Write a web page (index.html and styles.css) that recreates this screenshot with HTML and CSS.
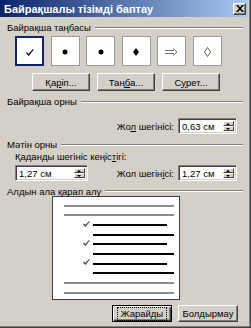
FILE: index.html
```html
<!DOCTYPE html>
<html lang="kk">
<head>
    <meta charset="UTF-8">
    <title>Байрақшалы тізімді баптау</title>

    <link rel="stylesheet" href="styles.css">
</head>
<body>

<div class="window">

    <div class="titlebar">
        <span class="title">Байрақшалы тізімді баптау</span>
        <span class="close">
            <svg width="8" height="7" viewBox="0 0 8 7"><path d="M0 0h2l2 2.2L6 0h2L5 3.5 8 7H6L4 4.8 2 7H0l3-3.5z" fill="#000"/></svg>
        </span>
    </div>

    <div class="body">

        <div class="legend"><span>Байрақша таңбасы</span></div>

        <div class="bullets">
            <div class="bullet selected">
                <svg width="8" height="7" viewBox="0 0 8 7"><path d="M0 4 1.1 3.2 2.6 4.9 6.9 0 7.7 .7 2.7 7z" fill="#000"/></svg>
            </div>
            <div class="bullet">
                <svg width="6" height="6" viewBox="0 0 6 6"><circle cx="3" cy="3" r="2.5" fill="#000"/></svg>
            </div>
            <div class="bullet">
                <svg width="6" height="6" viewBox="0 0 6 6"><circle cx="3" cy="3" r="2.5" fill="#000"/></svg>
            </div>
            <div class="bullet">
                <svg width="6" height="8" viewBox="0 0 6 8"><path d="M3 0 6 4 3 8 0 4z" fill="#000"/></svg>
            </div>
            <div class="bullet">
                <svg width="13" height="8" viewBox="0 0 13 8"><path d="M0 2.5h9M0 5.5h9M8 .5 12 4 8 7.5" fill="none" stroke="#707070" stroke-width="1"/></svg>
            </div>
            <div class="bullet">
                <svg width="7" height="10" viewBox="0 0 7 10"><path d="M3.5 .5 6.5 5 3.5 9.5 .5 5z" fill="none" stroke="#606060" stroke-width="1"/></svg>
            </div>
        </div>

        <div class="btnrow">
            <a class="btn" href="javascript:void(0)">Қа<u>р</u>іп...</a>
            <a class="btn" href="javascript:void(0)">Таң<u>б</u>а...</a>
            <a class="btn" href="javascript:void(0)">С<u>у</u>рет...</a>
        </div>

        <div class="legend"><span>Байрақша орны</span></div>

        <div class="row right">
            <span class="lbl">Жо<u>л</u> шегінісі:</span>
            <div class="spin">
                <span class="val">0,63 см</span>
                <span class="arrows"><span class="up"></span><span class="down"></span></span>
            </div>
        </div>

        <div class="legend"><span>Мәтін орны</span></div>

        <div class="caption">Қаданды шегініс кеңіс<u>т</u>ігі:</div>

        <div class="row split">
            <div class="spin wide">
                <span class="val">1,27 см</span>
                <span class="arrows"><span class="up"></span><span class="down"></span></span>
            </div>
            <div class="pair">
                <span class="lbl">Жол шегін<u>і</u>сі:</span>
                <div class="spin">
                    <span class="val">1,27 см</span>
                    <span class="arrows"><span class="up"></span><span class="down"></span></span>
                </div>
            </div>
        </div>

        <div class="legend short"><span>Алдын ала қарап алу</span></div>

        <div class="preview">
            <div class="line gray"></div>
            <div class="line gray"></div>
            <div class="line black short"><svg class="tick" width="7" height="6" viewBox="0 0 7 6"><path d="M0 3.3 1 2.6 2.3 4 6.2 0 6.9 .6 2.4 6z" fill="#404040"/></svg></div>
            <div class="line black"></div>
            <div class="line black short"><svg class="tick" width="7" height="6" viewBox="0 0 7 6"><path d="M0 3.3 1 2.6 2.3 4 6.2 0 6.9 .6 2.4 6z" fill="#404040"/></svg></div>
            <div class="line black"></div>
            <div class="line black short"><svg class="tick" width="7" height="6" viewBox="0 0 7 6"><path d="M0 3.3 1 2.6 2.3 4 6.2 0 6.9 .6 2.4 6z" fill="#404040"/></svg></div>
            <div class="line black"></div>
            <div class="line gray"></div>
            <div class="line gray"></div>
        </div>

        <div class="actions">
            <a class="btn default" href="javascript:void(0)"><span class="focus">Жарайды</span></a>
            <a class="btn" href="javascript:void(0)">Болдырмау</a>
        </div>

    </div>

</div>

</body>
</html>
```

FILE: styles.css
```css
*{
    margin:0;
    padding:0;
    box-sizing:border-box;
}

body{
    font-family:"Liberation Sans", Arial, sans-serif;
    font-size:9.5px;
    color:#000;
    background:#d4d0c8;
}

.window{
    width:251px;
    height:328px;
    background:#d4d0c8;
    border-right:1px solid #404040;
    border-bottom:1px solid #404040;
    box-shadow:inset -1px -1px #808080;
    padding:0 2px 2px 0;
    display:flex;
    flex-direction:column;
}

.titlebar{
    height:17px;
    background:linear-gradient(to right, #0a246a, #a6caf0);
    display:flex;
    align-items:center;
    justify-content:space-between;
    padding:0 2px 0 4px;
}

.title{
    color:#fff;
    font-weight:bold;
    font-size:11px;
}

.close{
    width:13px;
    height:12px;
    background:#d4d0c8;
    border:1px solid;
    border-color:#fff #404040 #404040 #fff;
    box-shadow:inset -1px -1px #808080;
    display:flex;
    align-items:center;
    justify-content:center;
}

.body{
    flex:1;
    padding:0 5px 0 7px;
}

.legend{
    display:flex;
    align-items:center;
    gap:4px;
    height:11px;
    margin-top:5px;
}

.legend::after{
    content:"";
    flex:1;
    border-top:1px solid #808080;
    border-bottom:1px solid #fff;
}

.legend.short{
    height:10px;
}

.bullets{
    display:flex;
    gap:6.5px;
    margin:3px 0 0 8px;
}

.bullet{
    width:29px;
    height:30px;
    background:#fff;
    border:1px solid #9a9a9a;
    display:flex;
    align-items:center;
    justify-content:center;
    padding-top:2px;
}

.bullet.selected{
    border:2px solid #0a246a;
}

.btnrow{
    display:flex;
    gap:7px;
    margin:7px 0 0 25px;
}

.btn{
    display:flex;
    align-items:center;
    justify-content:center;
    width:58px;
    height:18px;
    background:#d4d0c8;
    color:#000;
    text-decoration:none;
    border:1px solid;
    border-color:#fff #404040 #404040 #fff;
    box-shadow:inset -1px -1px #808080;
}

.btn.default{
    border:1px solid #000;
    box-shadow:inset 1px 1px #fff, inset -1px -1px #404040, inset -2px -2px #808080;
}

.focus{
    border:1px dotted #000;
    padding:1px 3px;
    line-height:10px;
}

.row{
    display:flex;
    align-items:center;
    height:16px;
}

.row.right{
    justify-content:flex-end;
    margin-top:11px;
    padding-right:6px;
}

.row.split{
    justify-content:space-between;
    margin:3px 0 0 8px;
    padding-right:6px;
}

.pair{
    display:flex;
    align-items:center;
}

.lbl{
    margin-right:4px;
}

.spin{
    display:flex;
    width:59px;
    height:16px;
    background:#fff;
    border:1px solid;
    border-color:#808080 #fff #fff #808080;
    box-shadow:inset 1px 1px #404040, inset -1px -1px #d4d0c8;
    padding:2px;
}

.spin.wide{
    width:73px;
}

.val{
    flex:1;
    line-height:11px;
    padding-left:1px;
}

.arrows{
    width:11px;
    display:flex;
    flex-direction:column;
}

.arrows span{
    flex:1;
    background:#d4d0c8;
    border:1px solid;
    border-color:#fff #404040 #404040 #fff;
    position:relative;
}

.arrows span::after{
    content:"";
    position:absolute;
    left:2px;
    border-left:2.5px solid transparent;
    border-right:2.5px solid transparent;
}

.arrows .up::after{
    top:1px;
    border-bottom:2px solid #000;
}

.arrows .down::after{
    top:1px;
    border-top:2px solid #000;
}

.caption{
    margin:1px 0 0 8px;
    line-height:11px;
}

.preview{
    width:128px;
    height:104px;
    margin-left:45px;
    background:#fff;
    border:1px solid #404040;
    padding:4px 0 0 11px;
    display:flex;
    flex-direction:column;
}

.line{
    height:9.67px;
    display:flex;
    align-items:center;
}

.line::after{
    content:"";
    height:2px;
    width:110px;
}

.line.gray::after{
    background:#8c8c8c;
}

.line.black{
    padding-left:29px;
}

.line.black::after{
    background:#000;
    width:81px;
}

.line.black.short::after{
    width:74px;
}

.tick{
    margin-left:-10px;
    margin-right:3px;
    margin-top:-3px;
}

.actions{
    display:flex;
    justify-content:flex-end;
    gap:6px;
    margin-top:5px;
    padding-right:5px;
}

.actions .btn{
    width:60px;
    height:17px;
}
```
